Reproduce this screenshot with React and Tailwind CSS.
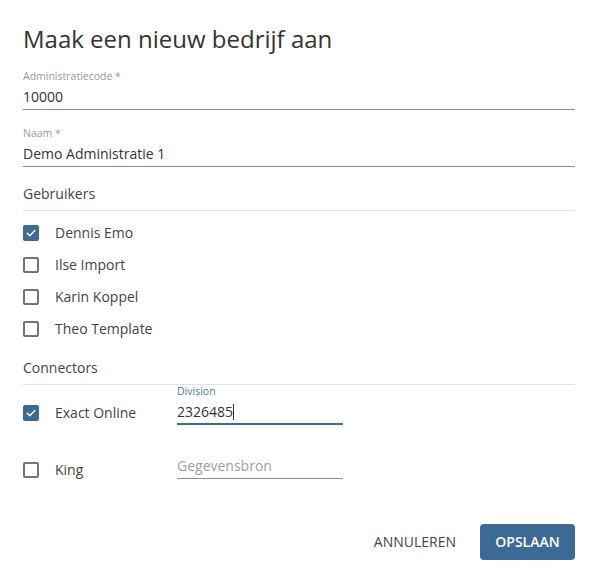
import React from "react";

function Check({ checked }) {
  if (checked) {
    return (
      <div className="w-[16px] h-[16px] rounded-[2px] bg-[#3d6a94] flex items-center justify-center shrink-0">
        <svg width="12" height="12" viewBox="0 0 12 12" fill="none">
          <path d="M2.2 6.2 L4.8 8.7 L9.8 3.4" stroke="white" strokeWidth="1.4" strokeLinecap="round" strokeLinejoin="round" />
        </svg>
      </div>
    );
  }
  return <div className="w-[16px] h-[16px] rounded-[2px] border-2 border-[#757575] shrink-0" />;
}

function Field({ label, value, mt }) {
  return (
    <div className={mt}>
      <div className="text-[10.5px] leading-[12px] text-[#9a9a9a]">{label}</div>
      <div className="mt-[5px] text-[14px] leading-[20px] text-[#333] pb-[2px] border-b border-[#8f8f8f]">{value}</div>
    </div>
  );
}

function UserRow({ name, checked }) {
  return (
    <div className="h-[32px] flex items-center">
      <Check checked={checked} />
      <span className="ml-[16px] text-[14px] leading-[20px] text-[#444]">{name}</span>
    </div>
  );
}

export default function App() {
  return (
    <div
      className="w-[598px] h-[585px] bg-white px-[23px] pt-[23px] overflow-hidden"
      style={{ fontFamily: '"Open Sans", "Noto Sans", sans-serif' }}
    >
      <h1 className="text-[24px] leading-[32px] text-[#333] font-normal">Maak een nieuw bedrijf aan</h1>

      <Field mt="mt-[15px]" label="Administratiecode *" value="10000" />
      <Field mt="mt-[17px]" label="Naam *" value="Demo Administratie 1" />

      <div className="mt-[17px] text-[14px] leading-[20px] text-[#444]">Gebruikers</div>
      <div className="mt-[6px] h-px bg-[#e2e2e2]" />

      <div className="mt-[6px]">
        <UserRow name="Dennis Emo" checked />
        <UserRow name="Ilse Import" />
        <UserRow name="Karin Koppel" />
        <UserRow name="Theo Template" />
      </div>

      <div className="mt-[13px] text-[14px] leading-[20px] text-[#444]">Connectors</div>
      <div className="mt-[6px] h-px bg-[#e2e2e2]" />

      <div className="flex items-start">
        <div className="w-[154px] pt-[18px] flex items-center h-[38px]">
          <Check checked />
          <span className="ml-[16px] text-[14px] leading-[20px] text-[#444]">Exact Online</span>
        </div>
        <div className="w-[166px]">
          <div className="text-[10.5px] leading-[12px] text-[#4a79a6]">Division</div>
          <div className="mt-[5px] text-[14px] leading-[20px] text-[#333] pb-[1px] border-b-2 border-[#3d6a94] flex items-center">
            <span>2326485</span>
            <span className="inline-block w-px h-[16px] bg-[#333]" />
          </div>
        </div>
      </div>

      <div className="mt-[14px] flex items-start">
        <div className="w-[154px] pt-[21px] flex items-center h-[41px]">
          <Check />
          <span className="ml-[16px] text-[14px] leading-[20px] text-[#444]">King</span>
        </div>
        <div className="w-[166px]">
          <div className="h-[12px]" />
          <div className="mt-[5px] text-[14px] leading-[20px] text-[#a0a0a0] pb-[2px] border-b border-[#8f8f8f]">Gegevensbron</div>
        </div>
      </div>

      <div className="mt-[44px] flex justify-end items-center">
        <button className="px-[8px] h-[36px] text-[14px] leading-[20px] text-[#444] tracking-normal">ANNULEREN</button>
        <button className="ml-[16px] w-[95px] h-[36px] rounded-[4px] bg-[#3d6a94] text-white text-[14px] leading-[20px] font-semibold">OPSLAAN</button>
      </div>
    </div>
  );
}
